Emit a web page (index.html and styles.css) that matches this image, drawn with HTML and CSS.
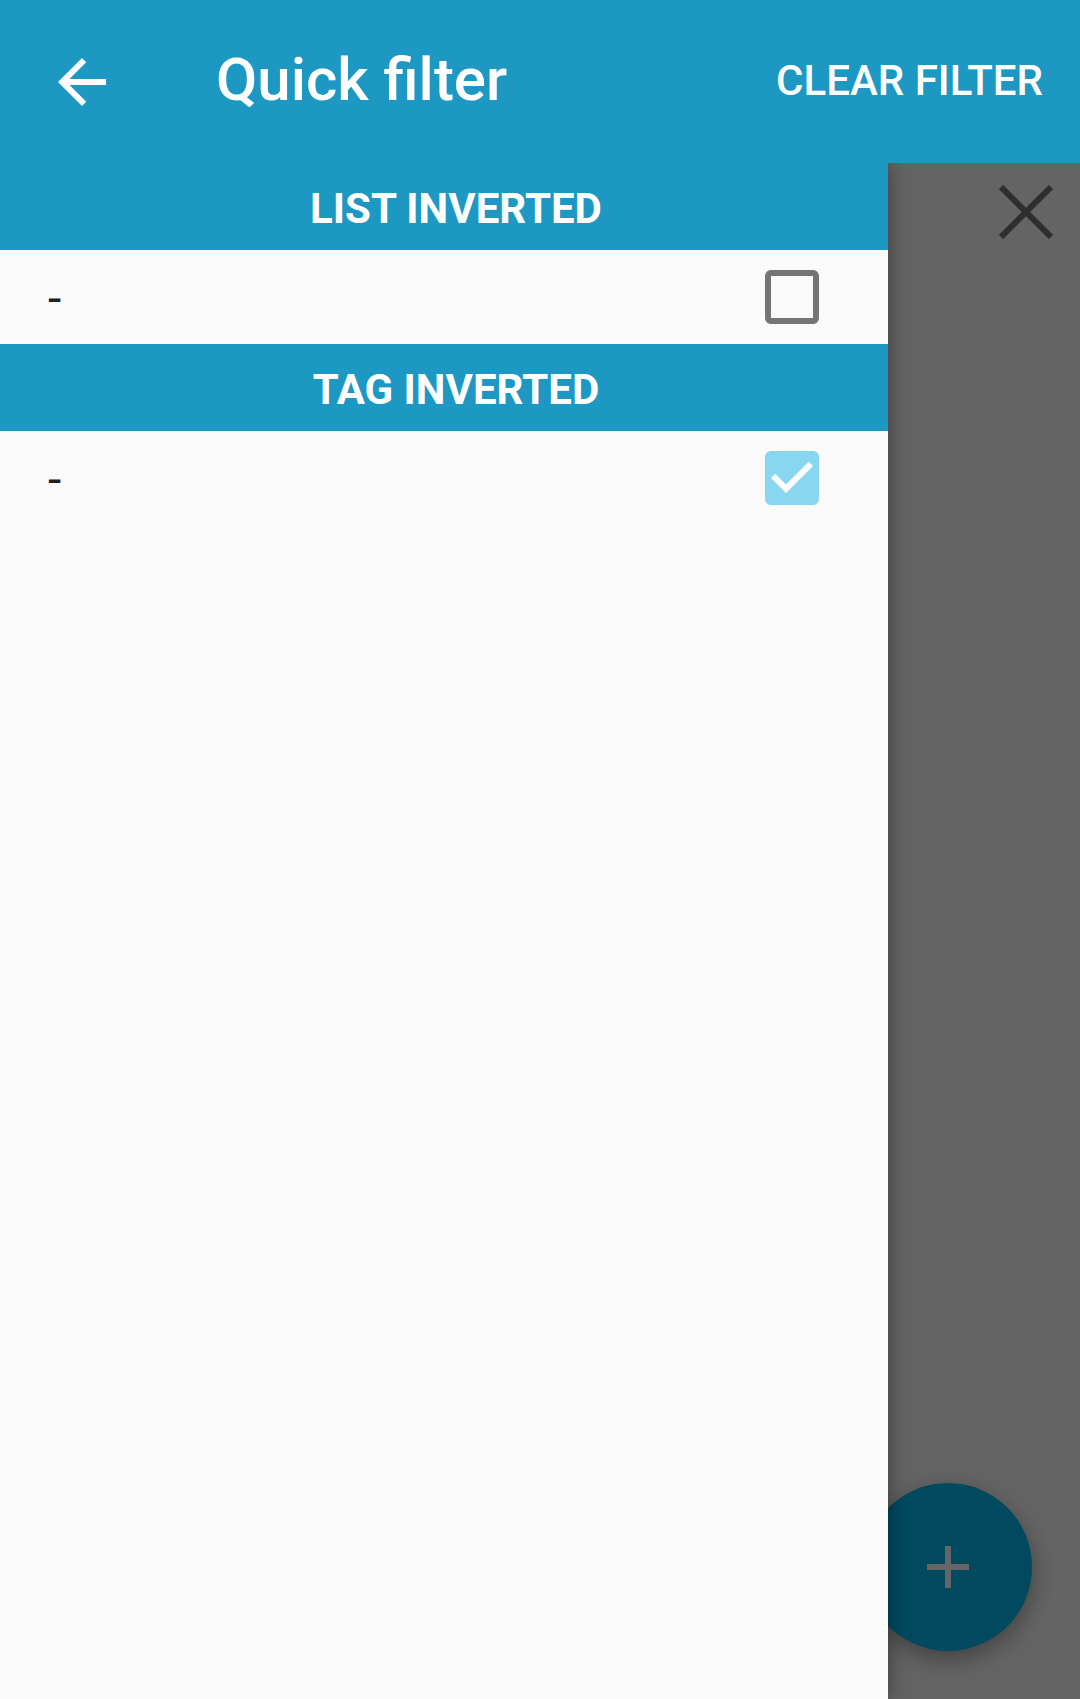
FILE: index.html
```html
<!DOCTYPE html>
<html>
<head>
<meta charset="utf-8">
<link rel="stylesheet" href="styles.css">
</head>
<body>
<div class="screen">
  <header class="appbar">
    <svg class="back" viewBox="0 0 24 24" width="72" height="72"><path fill="#fff" d="M20 11H7.83l5.59-5.59L12 4l-8 8 8 8 1.41-1.41L7.83 13H20v-2z"/></svg>
    <h1 class="title">Quick filter</h1>
    <span class="action">CLEAR FILTER</span>
  </header>
  <div class="stage">
    <div class="page">
      <div class="page-bar">
        <svg class="close" viewBox="0 0 54 54" width="54" height="54"><path d="M2 2L52 52M52 2L2 52" stroke="#000" stroke-opacity="0.54" stroke-width="6" fill="none"/></svg>
      </div>
      <div class="fab">
        <svg viewBox="0 0 42 42" width="42" height="42"><path d="M21 0V42M0 21H42" stroke="#fff" stroke-width="6"/></svg>
      </div>
    </div>
    <div class="scrim"></div>
    <nav class="drawer">
      <div class="section">LIST INVERTED</div>
      <div class="row">
        <span class="label">-</span>
        <svg class="check" viewBox="0 0 24 24" width="72" height="72"><path fill="#757575" d="M19 5v14H5V5h14m0-2H5c-1.1 0-2 .9-2 2v14c0 1.1.9 2 2 2h14c1.1 0 2-.9 2-2V5c0-1.1-.9-2-2-2z"/></svg>
      </div>
      <div class="section">TAG INVERTED</div>
      <div class="row">
        <span class="label">-</span>
        <svg class="check" viewBox="0 0 24 24" width="72" height="72"><path fill="#89d6f1" d="M19 3H5c-1.11 0-2 .9-2 2v14c0 1.1.89 2 2 2h14c1.11 0 2-.9 2-2V5c0-1.1-.89-2-2-2z"/><path fill="#fff" d="M10 17l-5-5 1.41-1.41L10 14.17l7.59-7.59L19 8l-9 9z"/></svg>
      </div>
    </nav>
  </div>
</div>
</body>
</html>
```
FILE: styles.css
```css
html, body {
  margin: 0;
  padding: 0;
}
body {
  width: 1080px;
  height: 1699px;
  overflow: hidden;
  font-family: Roboto, "Noto Sans", sans-serif;
  background: #fafafa;
}
.screen {
  display: flex;
  flex-direction: column;
  width: 1080px;
  height: 1699px;
}
.appbar {
  flex: 0 0 163px;
  display: flex;
  align-items: center;
  background: #1c98c3;
  color: #fff;
  padding: 0 37px 0 46px;
  box-sizing: border-box;
}
.back {
  display: block;
  flex: none;
}
.title {
  margin: 0 0 0 98px;
  font-size: 60px;
  font-weight: 500;
  line-height: 1;
  flex: 1;
  position: relative;
  top: -2px;
}
.action {
  font-size: 42px;
  font-weight: 500;
  line-height: 1;
  position: relative;
  top: -1px;
}
.stage {
  flex: 1;
  position: relative;
  overflow: hidden;
}
.page {
  height: 100%;
  background: #fafafa;
}
.page-bar {
  display: flex;
  justify-content: flex-end;
  padding: 22px 27px 0 0;
}
.close {
  display: block;
  filter: blur(0.6px);
}
.fab {
  position: absolute;
  right: 48px;
  bottom: 48px;
  width: 168px;
  height: 168px;
  border-radius: 50%;
  background: #03b7ee;
  display: flex;
  align-items: center;
  justify-content: center;
  box-shadow: 0 8px 24px rgba(0,0,0,0.35);
}
.fab svg {
  display: block;
}
.scrim {
  position: absolute;
  inset: 0;
  background: rgba(0,0,0,0.6);
}
.drawer {
  position: absolute;
  left: 0;
  top: 0;
  bottom: 0;
  width: 888px;
  background: #fafafa;
  box-shadow: 2px 0 18px rgba(0,0,0,0.35);
}
.section {
  height: 87px;
  box-sizing: border-box;
  display: flex;
  align-items: center;
  justify-content: center;
  padding: 4px 0 0 24px;
  background: #1c98c3;
  color: #fff;
  font-size: 42px;
  font-weight: 700;
}
.row {
  height: 94px;
  display: flex;
  align-items: center;
  justify-content: space-between;
  padding: 0 60px 0 48px;
}
.label {
  font-size: 48px;
  color: #212121;
  line-height: 1;
  position: relative;
  top: 2px;
}
.check {
  display: block;
}
```
